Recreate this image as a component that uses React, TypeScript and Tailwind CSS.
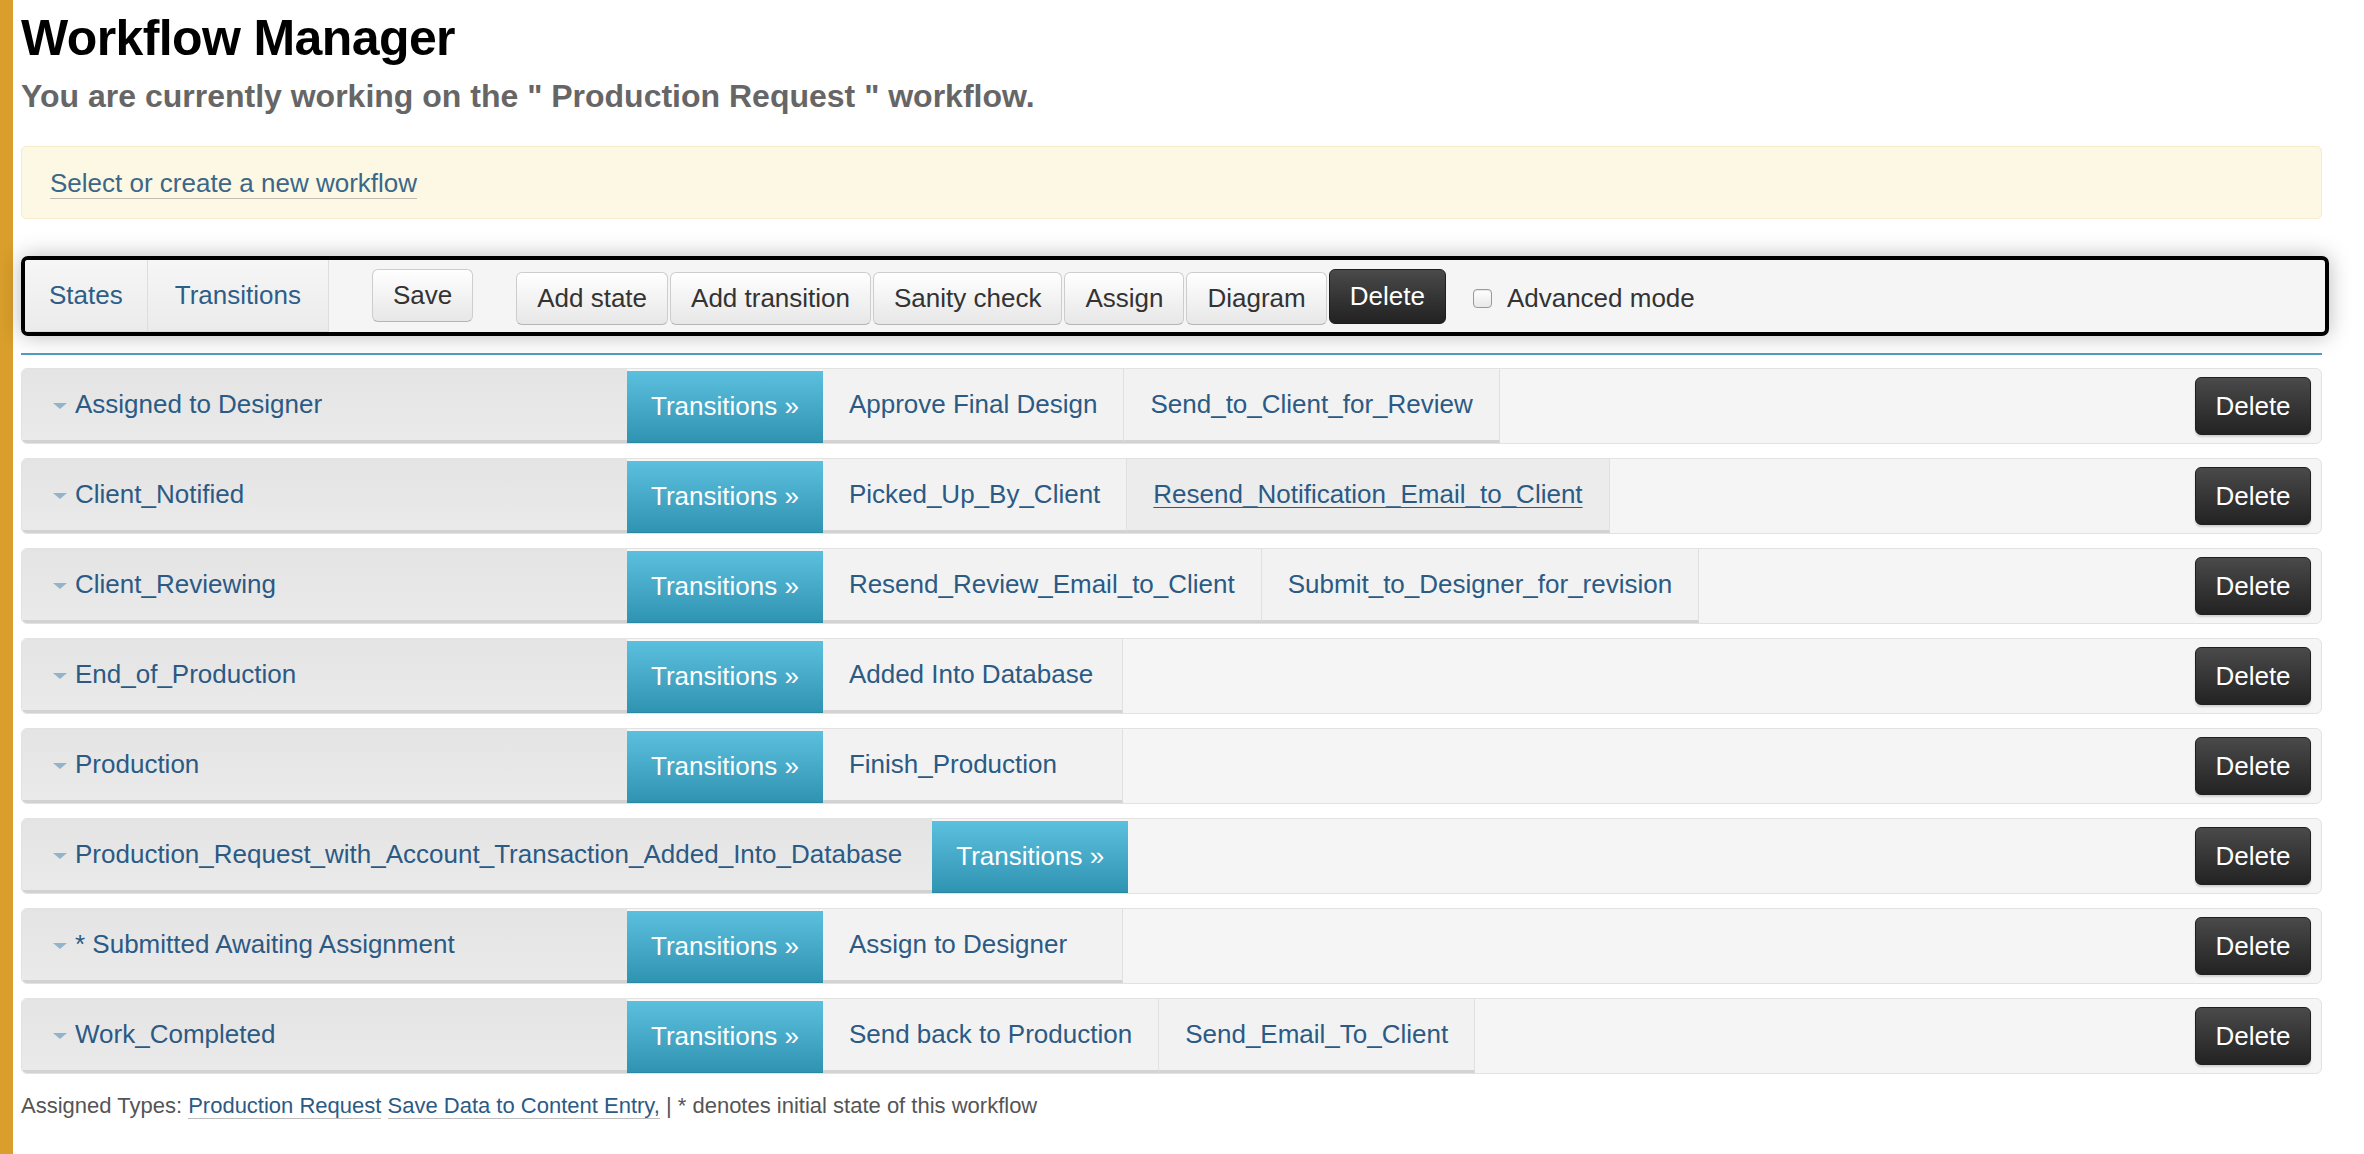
import React from 'react'

type Row = {
    name: string
    transitions: string[]
    hover?: string
}

const rows: Row[] = [
    { name: 'Assigned to Designer', transitions: ['Approve Final Design', 'Send_to_Client_for_Review'] },
    { name: 'Client_Notified', transitions: ['Picked_Up_By_Client', 'Resend_Notification_Email_to_Client'], hover: 'Resend_Notification_Email_to_Client' },
    { name: 'Client_Reviewing', transitions: ['Resend_Review_Email_to_Client', 'Submit_to_Designer_for_revision'] },
    { name: 'End_of_Production', transitions: ['Added Into Database'] },
    { name: 'Production', transitions: ['Finish_Production'] },
    { name: 'Production_Request_with_Account_Transaction_Added_Into_Database', transitions: [] },
    { name: '* Submitted Awaiting Assignment', transitions: ['Assign to Designer'] },
    { name: 'Work_Completed', transitions: ['Send back to Production', 'Send_Email_To_Client'] },
]

const toolButtons = ['Add state', 'Add transition', 'Sanity check', 'Assign', 'Diagram']

function StateRow({ row }: { row: Row }) {
    return (
        <div className="flex h-[76px] mb-[14px] items-stretch rounded-[6px] border border-[#e2e2e2] bg-[#f5f5f5] overflow-hidden text-[26px]">
            {/* state name */}
            <div className="flex items-center min-w-[605px] pl-[31px] pr-[30px] bg-linear-to-b from-[#e4e4e4] to-[#eaeaea] border-b-[3px] border-[#d2d2d2]">
                <span className="shrink-0 w-0 h-0 border-l-[7px] border-r-[7px] border-t-[6px] border-l-transparent border-r-transparent border-t-[#93b3cb] mr-[8px] mt-[2px]" />
                <span className="text-[#2b5a84] whitespace-nowrap">{row.name}</span>
            </div>

            {/* transitions button */}
            <div className="flex items-center px-[24px] mt-[2px] bg-linear-to-b from-[#5bc0de] to-[#2f93b2] text-white whitespace-nowrap border-b border-[#2b88a5]">
                Transitions »
            </div>

            {row.transitions.map((t) => (
                <div
                    key={t}
                    className={`flex items-center min-w-[300px] px-[26px] border-r border-[#e0e0e0] border-b-[3px] border-b-[#d3d3d3] text-[#2b5a84] whitespace-nowrap ${row.hover === t ? 'bg-[#ececec]' : 'bg-[#f2f2f2]'}`}
                >
                    <span className={row.hover === t ? 'underline underline-offset-[4px] decoration-1' : ''}>{t}</span>
                </div>
            ))}

            <div className="flex-1" />

            <div className="flex items-center pr-[10px]">
                <button className="h-[58px] w-[116px] rounded-[6px] border border-[#1f1f1f] bg-linear-to-b from-[#4a4a4a] to-[#232323] text-white text-[26px] shadow-[0_2px_2px_rgba(0,0,0,0.15)]">
                    Delete
                </button>
            </div>
        </div>
    )
}

export default function App() {
    return (
        <div className="min-h-screen bg-white border-l-[13px] border-[#d99e2b] font-['Liberation_Sans',Arial,sans-serif]">
            <div className="pl-[8px] pr-[42px] pt-[11px] pb-[20px]">
                {/* header */}
                <h1 className="text-[50px] leading-[54px] font-bold text-black tracking-[-0.6px]">Workflow Manager</h1>
                <h2 className="mt-[14px] text-[32px] leading-[34px] font-bold text-[#666666]">
                    You are currently working on the " Production Request " workflow.
                </h2>

                {/* alert */}
                <div className="mt-[33px] rounded-[5px] border border-[#f6ebcd] bg-[#fcf8e3] pl-[28px] pt-[18px] pb-[17px] text-[26px] leading-[36px]">
                    <a className="text-[#3b6788] border-b border-[#bdbdb5]">Select or create a new workflow</a>
                </div>

                {/* toolbar */}
                <div className="mt-[37px] -mr-[7px] h-[80px] flex items-stretch rounded-[7px] border-[4px] border-black bg-[#f5f5f5] shadow-[0_0_22px_rgba(0,0,0,0.28)] overflow-hidden text-[26px]">
                    <div className="flex items-center px-[24px] bg-linear-to-b from-[#f6f6f6] to-[#ebebeb] border-b border-[#dcdcdc] border-r border-r-[#dddddd] text-[#2d5e88]">
                        States
                    </div>
                    <div className="flex items-center px-[27px] bg-linear-to-b from-[#f6f6f6] to-[#ebebeb] border-b border-[#dcdcdc] border-r border-r-[#dddddd] text-[#2d5e88]">
                        Transitions
                    </div>

                    <div className="flex items-center ml-[43px] -mt-[1px]">
                        <button className="h-[53px] px-[20px] rounded-[6px] border border-[#cdcdcd] border-b-[#b5b5b5] bg-linear-to-b from-[#ffffff] to-[#e7e7e7] text-[26px] text-[#333333]">
                            Save
                        </button>
                    </div>

                    <div className="flex items-center ml-[43px] mt-[4px] gap-[2px]">
                        {toolButtons.map((b) => (
                            <button
                                key={b}
                                className="h-[53px] px-[20px] rounded-[6px] border border-[#cdcdcd] border-b-[#b5b5b5] bg-linear-to-b from-[#ffffff] to-[#e7e7e7] text-[26px] text-[#333333] whitespace-nowrap"
                            >
                                {b}
                            </button>
                        ))}
                        <button className="h-[55px] -mt-[3px] px-[20px] rounded-[6px] border border-[#1f1f1f] bg-linear-to-b from-[#4a4a4a] to-[#222222] text-[26px] text-white">
                            Delete
                        </button>
                    </div>

                    <label className="flex items-center ml-[27px] mt-[4px] gap-[15px] text-[#333333]">
                        <span className="shrink-0 block w-[19px] h-[19px] rounded-[4px] border border-[#9a9a9a] bg-linear-to-b from-[#ffffff] to-[#e8e8e8] shadow-[inset_0_1px_1px_rgba(0,0,0,0.1)]" />
                        Advanced mode
                    </label>
                </div>

                {/* blue rule */}
                <div className="mt-[17px] h-[2px] bg-[#4d9bc0]" />

                {/* states */}
                <div className="mt-[13px]">
                    {rows.map((r) => (
                        <StateRow key={r.name} row={r} />
                    ))}
                </div>

                {/* footer */}
                <p className="mt-[18px] text-[22px] leading-[28px] text-[#555555]">
                    Assigned Types:{' '}
                    <a className="text-[#2b5a84] border-b border-[#bdbdbd]">Production Request</a>{' '}
                    <a className="text-[#2b5a84] border-b border-[#bdbdbd]">Save Data to Content Entry,</a> | * denotes initial state of this workflow
                </p>
            </div>
        </div>
    )
}
